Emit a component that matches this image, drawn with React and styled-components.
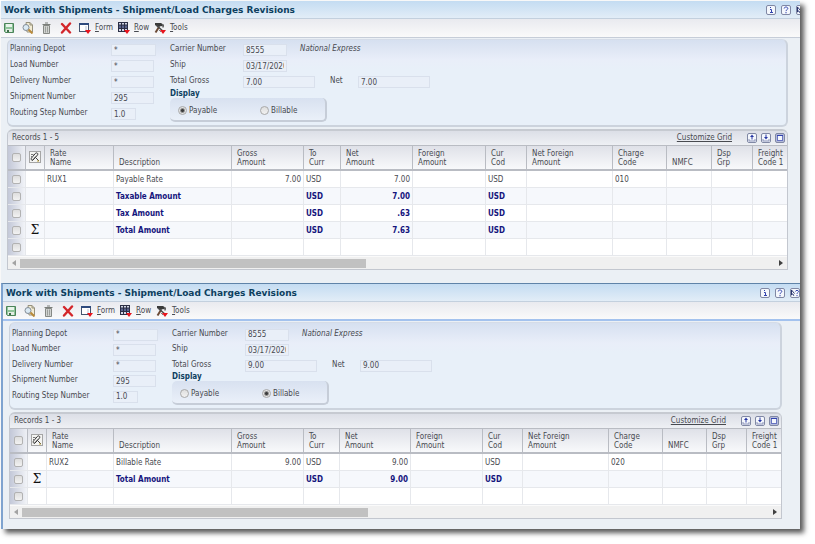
import React, { useState } from 'react';
import styled, { createGlobalStyle } from 'styled-components';

const GlobalStyle = createGlobalStyle`
  * {
    box-sizing: border-box;
  }
  body {
    margin: 0;
    background: white;
    font-family: "DejaVu Sans Condensed", "Open Sans", sans-serif;
    font-size: 8px;
    line-height: 10px;
    color: #484a50;
  }
  button, input {
    font: inherit;
    color: inherit;
    margin: 0;
    padding: 0;
  }
`;

const Shell = styled.main`
  margin: 1px 15px 15px 1px;
  background: #ebf0f5;
  box-shadow: 4px 4px 5px rgba(0, 0, 0, 0.65);
`;

const Clip = styled.div`
  overflow: hidden;
`;

const Window = styled.section`
  ${(props) => (props.$framed ? `
    border-top: 1px solid #5f83a8;
    border-left: 2px solid #7fa3cf;
    padding-bottom: 10px;
  ` : `
    margin-right: -6px;
    padding-bottom: 13px;
  `)}
`;

const TitleBar = styled.header`
  display: flex;
  align-items: center;
  justify-content: space-between;
  height: 18px;
  padding: 0 0 0 3px;
  border-bottom: 1px solid #c3d0de;
  background: linear-gradient(#c4dcf2, #e2edf7);
`;

const Title = styled.h1`
  margin: 0;
  font-family: "DejaVu Sans", "Open Sans", sans-serif;
  font-size: 9px;
  line-height: 12px;
  font-weight: 700;
  color: #0d3f60;
`;

const IconRow = styled.div`
  display: flex;
  align-items: center;
  gap: ${(props) => props.$gap || 4}px;
`;

const IconButton = styled.button`
  display: flex;
  border: 0;
  background: none;
  cursor: pointer;
`;

const Toolbar = styled.nav`
  display: flex;
  align-items: center;
  gap: 7px;
  height: 19px;
  padding: 0 2px;
  background: linear-gradient(#e9eaef, #fafafa);
  border-bottom: ${(props) => (props.$framed ? '2px solid #a3c2ee' : '1px solid #c6cdd8')};
`;

const MenuButton = styled(IconButton)`
  align-items: center;
  gap: 4px;
`;

const Panel = styled.form`
  display: flex;
  height: 88px;
  margin: 1px 18px 0 6px;
  padding: ${(props) => (props.$compact ? '4px' : '2px')} 0 0 2px;
  border: 1px solid #ccd3dd;
  border-width: 1px 2px 2px 1px;
  border-top-color: #d5dce8;
  border-radius: 6px;
  background: linear-gradient(#d6e0f0, #e9eef9 20px, #e8f0f9 30px);
`;

const FieldColumn = styled.div`
  display: grid;
  align-content: start;
  grid-auto-rows: ${(props) => (props.$compact ? '15px 16px' : '16px')};
  width: ${(props) => (props.$width ? `${props.$width}px` : 'auto')};
`;

const FieldRow = styled.div`
  display: flex;
  align-items: center;
`;

const Label = styled.label`
  width: ${(props) => props.$width}px;
  padding-bottom: 2px;
  white-space: nowrap;
`;

const Field = styled.input`
  width: ${(props) => props.$width}px;
  height: 12px;
  padding: 0 2px;
  border: 1px solid #d9e0ec;
  background: #e9eff8;
  outline: none;
`;

const Carrier = styled.em`
  margin-left: 13px;
  padding-bottom: 2px;
`;

const NetLabel = styled(Label)`
  margin-left: 15px;
`;

const Display = styled.fieldset`
  grid-row: span 2;
  min-width: 0;
  width: 157px;
  margin: 0;
  padding: 0;
  border: 0;
`;

const Legend = styled.legend`
  padding: 0;
  line-height: 8px;
  font-weight: 700;
  color: #0d3f60;
`;

const RadioBox = styled.div`
  display: flex;
  align-items: center;
  height: 24px;
  padding: 3px 0 0 8px;
  border: solid #c6cdd8;
  border-width: 0 2px 2px 0;
  border-radius: 5px;
  background: linear-gradient(#d8e1f0, #eaf0f9);
`;

const RadioLabel = styled.label`
  display: flex;
  flex: none;
  align-items: center;
  gap: 2px;
  &:first-child {
    width: 82px;
  }
`;

const Radio = styled.input`
  appearance: none;
  width: 9px;
  height: 9px;
  border: 1px solid #a9a9a9;
  border-radius: 50%;
  background: linear-gradient(#dcdcdc, #f4f4f4) border-box;
  &:checked {
    background: radial-gradient(circle, #3c3c3c 1px, #e6e6e6 3px) border-box;
  }
`;

const GridBox = styled.div`
  margin: 2px 18px 0 6px;
  border: 1px solid #c3c7cf;
  border-top: 2px solid #c6cad1;
  border-radius: 6px 6px 0 0;
  overflow: hidden;
`;

const GridBar = styled.div`
  display: flex;
  align-items: center;
  height: 14px;
  padding: 0 2px 0 4px;
  background: linear-gradient(#dcdfe7, #eef0f4);
`;

const GridLink = styled.a`
  margin-left: auto;
  margin-right: 15px;
  color: #484a50;
  text-decoration: underline;
`;

const Table = styled.table`
  width: 100%;
  table-layout: fixed;
  border-collapse: separate;
  border-spacing: 0;
  background: white;
`;

const Th = styled.th`
  height: 26px;
  padding: 0 0 2px 5px;
  border: solid #b9bcc3;
  border-width: 1px 1px 2px 0;
  background: linear-gradient(#dfe1e8, #f8f9fb);
  line-height: 9px;
  font-weight: 400;
  text-align: left;
  vertical-align: bottom;
  white-space: pre;
  &:last-child {
    border-right: 0;
  }
`;

const SelectTh = styled(Th)`
  padding: 0;
  text-align: center;
  vertical-align: middle;
  ${(props) => (props.$shaded ? 'background: linear-gradient(90deg, #c3c8d8, #eef0f5);' : '')}
`;

const Tr = styled.tr`
  background: ${(props) => (props.$odd ? '#f6f8fc' : 'white')};
  font-weight: ${(props) => (props.$total ? 700 : 400)};
  color: ${(props) => (props.$total ? '#14147c' : 'inherit')};
`;

const Td = styled.td`
  height: 17px;
  padding: 1px 2px 0;
  border: solid #e6e8ec;
  border-width: 0 1px 1px 0;
  text-align: ${(props) => (props.$right ? 'right' : 'left')};
  white-space: nowrap;
  &:last-child {
    border-right: 0;
  }
`;

const SelectTd = styled(Td)`
  padding: 0;
  background: linear-gradient(90deg, #c3c8d8, #f2f4f8);
  text-align: center;
`;

const SigmaTd = styled(Td)`
  padding: 0;
  font-family: "DejaVu Serif", serif;
  font-size: 12px;
  line-height: 12px;
  font-weight: 400;
  color: #101010;
  text-align: center;
`;

const Check = styled.input`
  appearance: none;
  display: block;
  width: 9px;
  height: 9px;
  margin: 0 auto;
  border: 1px solid #b2b2b2;
  border-radius: 2px;
  background: linear-gradient(#dedede, #f2f2f2);
`;

const ScrollBar = styled.div`
  display: flex;
  align-items: center;
  height: 13px;
  border-top: 1px solid #fafafa;
  background: #f0f0f0;
`;

const ScrollTrack = styled.div`
  flex: 1;
`;

const ScrollThumb = styled.div`
  width: 346px;
  height: 9px;
  background: #c1c1c1;
`;

const ScrollButton = styled(IconButton)`
  width: 12px;
  justify-content: center;
`;

const SaveIcon = () => (
  <svg width="12" height="12" viewBox="0 0 12 12">
    <path d="M1.500 1.500h9v9h-8l-1-1z" fill="#8fc49a" stroke="#4c8459" />
    <rect x="3" y="2" width="6" height="3" fill="#e8f4ea" />
    <rect x="3" y="7" width="6" height="3" fill="#e4ece4" />
    <rect x="4" y="8" width="2" height="2" fill="#3f6f49" />
  </svg>
);

const FindIcon = () => (
  <svg width="12" height="12" viewBox="0 0 12 12">
    <path d="M4 0.500h4l2.500 2.500v7H5z" fill="#f3ecd4" stroke="#96917c" />
    <path d="M8 0.500v2.500h2.500" fill="none" stroke="#96917c" />
    <circle cx="4" cy="5.500" r="3" fill="#dbeaf4" stroke="#848d97" />
    <path d="M6.500 7.500l4 4" stroke="#b98a3a" strokeWidth="2" />
  </svg>
);

const TrashIcon = () => (
  <svg width="12" height="12" viewBox="0 0 12 12">
    <path d="M2.500 3.500v8h6v-8z" fill="#d2d4d1" stroke="#858884" />
    <path d="M1.500 2.500h8M4 1h3" stroke="#7b7e7a" />
    <path d="M4.500 4.500v6M6.500 4.500v6" stroke="#9c9f9b" />
  </svg>
);

const DeleteIcon = () => (
  <svg width="12" height="12" viewBox="0 0 12 12">
    <path d="M2 2l8 8.500M10 1.500L2 10.500" stroke="#d3262a" strokeWidth="2.400" strokeLinecap="round" />
  </svg>
);

const FormIcon = () => (
  <svg width="12" height="12" viewBox="0 0 12 12">
    <rect x="0.500" y="1.500" width="9" height="8" fill="#fff" stroke="#44546e" />
    <rect x="0" y="1" width="10" height="2" fill="#2e4a7d" />
    <path d="M7 4v5" stroke="#b8c3d6" />
    <path d="M6 8h6l-3 4z" fill="#e8141c" />
  </svg>
);

const RowIcon = () => (
  <svg width="12" height="12" viewBox="0 0 12 12">
    <rect x="0.500" y="0.500" width="9" height="9" fill="#d3d7e6" stroke="#2b2f45" />
    <rect x="1" y="3" width="8" height="3" fill="#5a648e" />
    <path d="M3.500 1v9M6.500 1v9M0 3h10M0 6.500h10" stroke="#2b2f45" />
    <path d="M6 8h6l-3 4z" fill="#e8141c" />
  </svg>
);

const ToolsIcon = () => (
  <svg width="12" height="12" viewBox="0 0 12 12">
    <path d="M1 1h6l3 2v2L7 4 5 5 1 3z" fill="#3a3a3a" />
    <path d="M5 5l-3.500 5.500" stroke="#6b4a35" strokeWidth="2" />
    <path d="M2 3l8 7" stroke="#4a4a4a" strokeWidth="1.500" />
    <path d="M9 2v4M5 8l2 2" stroke="#808080" />
    <path d="M6 8h6l-3 4z" fill="#e8141c" />
  </svg>
);

const BoxIcon = ({ children, fill = '#f4f7fc' }) => (
  <svg width="10" height="10" viewBox="0 0 10 10">
    <rect x="0.500" y="0.500" width="9" height="9" rx="1.500" fill={fill} stroke="#8088a4" />
    {children}
  </svg>
);

const InfoIcon = () => (
  <BoxIcon>
    <path d="M4 4.500h1.500v3.500M4 7.500h3M4.500 2v1" fill="none" stroke="#3243ae" />
  </BoxIcon>
);

const HelpIcon = () => (
  <BoxIcon>
    <path d="M3.200 3.500c0-2 3.600-2 3.600 0 0 1.200-1.800 1.200-1.800 2.600M5 7v1.300" fill="none" stroke="#3243ae" />
  </BoxIcon>
);

const ItemHelpIcon = () => (
  <BoxIcon>
    <path d="M1.500 2v5l1.300-1.200 1 2M1.500 2l3 3.500" fill="none" stroke="#29356f" />
    <path d="M5.500 3.500c0-1.500 3-1.500 3 0 0 1-1.500 1-1.500 2.300M7 7v1.200" fill="none" stroke="#3243ae" />
  </BoxIcon>
);

const ExportIcon = () => (
  <BoxIcon>
    <path d="M2 6v2h6V6" fill="none" stroke="#8a92b8" />
    <path d="M5 6.500V3" stroke="#2636a4" />
    <path d="M3 4l2-2.500L7 4z" fill="#2636a4" />
  </BoxIcon>
);

const ImportIcon = () => (
  <BoxIcon>
    <path d="M2 6v2h6V6" fill="none" stroke="#8a92b8" />
    <path d="M5 1.500V5" stroke="#2636a4" />
    <path d="M3 4h4L5 6.500z" fill="#2636a4" />
  </BoxIcon>
);

const MaximizeIcon = () => (
  <BoxIcon fill="#b4bbda">
    <rect x="2.500" y="2.500" width="5" height="5" fill="#f4f7fc" stroke="#6874c2" />
    <path d="M2 2.500h6" stroke="#3243ae" />
  </BoxIcon>
);

const AttachIcon = () => (
  <svg width="12" height="12" viewBox="0 0 12 12">
    <rect x="0.500" y="0.500" width="11" height="11" fill="#f4f4f2" stroke="#a5a5a5" />
    <path d="M3.500 9.500l5-5.500c1.200-1.500-1-3-2.200-1.500L2.500 7C1.500 8.500 3 10 4.200 8.700L7 5.500" fill="none" stroke="#333" />
    <path d="M2 3.500h2.500M2 5.500h2" stroke="#777" />
    <path d="M7 7l3 3" stroke="#444" />
    <path d="M8 10h2" stroke="#c0a33c" />
  </svg>
);

const Arrow = ({ d, fill }) => (
  <svg width="4" height="6" viewBox="0 0 4 6">
    <path d={d} fill={fill} />
  </svg>
);

const headings = [
  'Rate\nName', 'Description', 'Gross\nAmount', 'To\nCurr', 'Net\nAmount', 'Foreign\nAmount',
  'Cur\nCod', 'Net Foreign\nAmount', 'Charge\nCode', 'NMFC', 'Dsp\nGrp', 'Freight\nCode 1',
];

// columns 2 and 4 hold amounts
const rightAligned = [2, 4];

const payable = {
  id: 'payable',
  records: 'Records 1 - 5',
  total: '7.00',
  mode: 'Payable',
  columns: [18, 19, 69, 118, 72, 37, 72, 73, 41, 86, 54, 45, 41],
  rows: [
    { cells: ['RUX1', 'Payable Rate', '7.00', 'USD', '7.00', '', 'USD', '', '010'] },
    { total: true, cells: ['', 'Taxable Amount', '', 'USD', '7.00', '', 'USD'] },
    { total: true, cells: ['', 'Tax Amount', '', 'USD', '.63', '', 'USD'] },
    { total: true, sigma: true, cells: ['', 'Total Amount', '', 'USD', '7.63', '', 'USD'] },
    { cells: [] },
  ],
};

const billable = {
  id: 'billable',
  framed: true,
  records: 'Records 1 - 3',
  total: '9.00',
  mode: 'Billable',
  columns: [18, 19, 67, 118, 72, 36, 71, 72, 40, 86, 54, 44, 40],
  rows: [
    { cells: ['RUX2', 'Billable Rate', '9.00', 'USD', '9.00', '', 'USD', '', '020'] },
    { total: true, sigma: true, cells: ['', 'Total Amount', '', 'USD', '9.00', '', 'USD'] },
    { cells: [] },
  ],
};

const Header = ({ framed }) => (
  <>
    <TitleBar>
      <Title>Work with Shipments - Shipment/Load Charges Revisions</Title>
      <IconRow $gap={5}>
        <IconButton type="button" aria-label="About"><InfoIcon /></IconButton>
        <IconButton type="button" aria-label="Help"><HelpIcon /></IconButton>
        <IconButton type="button" aria-label="Item help"><ItemHelpIcon /></IconButton>
      </IconRow>
    </TitleBar>
    <Toolbar $framed={framed}>
      <IconButton type="button" aria-label="Save"><SaveIcon /></IconButton>
      <IconButton type="button" aria-label="Find"><FindIcon /></IconButton>
      <IconButton type="button" aria-label="Delete"><TrashIcon /></IconButton>
      <IconButton type="button" aria-label="Close"><DeleteIcon /></IconButton>
      <IconRow $gap={5}>
        <MenuButton type="button"><FormIcon /><span><u>F</u>orm</span></MenuButton>
        <MenuButton type="button"><RowIcon /><span><u>R</u>ow</span></MenuButton>
        <MenuButton type="button"><ToolsIcon /><span><u>T</u>ools</span></MenuButton>
      </IconRow>
    </Toolbar>
  </>
);

const LeftField = ({ id, label, value, width = 43 }) => (
  <FieldRow>
    <Label htmlFor={id} $width={101}>{label}</Label>
    <Field id={id} $width={width} defaultValue={value} readOnly />
  </FieldRow>
);

const Details = ({ data }) => {
  const [mode, setMode] = useState(data.mode);
  const { id, total, framed } = data;

  return (
    <Panel $compact={framed}>
      <FieldColumn $width={160} $compact={framed}>
        <LeftField id={`${id}-depot`} label="Planning Depot" value="*" width={45} />
        <LeftField id={`${id}-load`} label="Load Number" value="*" />
        <LeftField id={`${id}-delivery`} label="Delivery Number" value="*" />
        <LeftField id={`${id}-shipment`} label="Shipment Number" value="295" />
        <LeftField id={`${id}-step`} label="Routing Step Number" value="1.0" width={25} />
      </FieldColumn>
      <FieldColumn $compact={framed}>
        <FieldRow>
          <Label htmlFor={`${id}-carrier`} $width={73}>Carrier Number</Label>
          <Field id={`${id}-carrier`} $width={44} defaultValue="8555" readOnly />
          <Carrier>National Express</Carrier>
        </FieldRow>
        <FieldRow>
          <Label htmlFor={`${id}-ship`} $width={73}>Ship</Label>
          <Field id={`${id}-ship`} $width={44} defaultValue="03/17/2020" readOnly />
        </FieldRow>
        <FieldRow>
          <Label htmlFor={`${id}-gross`} $width={73}>Total Gross</Label>
          <Field id={`${id}-gross`} $width={72} defaultValue={total} readOnly />
          <NetLabel htmlFor={`${id}-net`} $width={28}>Net</NetLabel>
          <Field id={`${id}-net`} $width={72} defaultValue={total} readOnly />
        </FieldRow>
        <Display>
          <Legend>Display</Legend>
          <RadioBox>
            {['Payable', 'Billable'].map((name) => (
              <RadioLabel key={name}>
                <Radio
                  type="radio"
                  name={`${id}-display`}
                  checked={mode === name}
                  onChange={() => setMode(name)}
                />
                {name}
              </RadioLabel>
            ))}
          </RadioBox>
        </Display>
      </FieldColumn>
    </Panel>
  );
};

const ChargesGrid = ({ data }) => (
  <GridBox>
    <GridBar>
      <span>{data.records}</span>
      <GridLink href="#customize">Customize Grid</GridLink>
      <IconRow>
        <IconButton type="button" aria-label="Export"><ExportIcon /></IconButton>
        <IconButton type="button" aria-label="Import"><ImportIcon /></IconButton>
        <IconButton type="button" aria-label="Maximize"><MaximizeIcon /></IconButton>
      </IconRow>
    </GridBar>
    <Table>
      <colgroup>
        {data.columns.map((width, i) => <col key={i} width={width} />)}
        <col />
      </colgroup>
      <thead>
        <tr>
          <SelectTh $shaded><Check type="checkbox" aria-label="Select all" /></SelectTh>
          <SelectTh><AttachIcon /></SelectTh>
          {headings.map((heading) => <Th key={heading}>{heading}</Th>)}
        </tr>
      </thead>
      <tbody>
        {data.rows.map((row, i) => (
          <Tr key={i} $odd={i % 2 === 1} $total={row.total}>
            <SelectTd><Check type="checkbox" aria-label={`Select row ${i + 1}`} /></SelectTd>
            <SigmaTd>{row.sigma ? 'Σ' : ''}</SigmaTd>
            {headings.map((heading, col) => (
              <Td key={heading} $right={rightAligned.includes(col)}>{row.cells[col]}</Td>
            ))}
          </Tr>
        ))}
      </tbody>
    </Table>
    <ScrollBar>
      <ScrollButton type="button" aria-label="Scroll left">
        <Arrow d="M4 0v6L0 3z" fill="#a3a3a3" />
      </ScrollButton>
      <ScrollTrack><ScrollThumb /></ScrollTrack>
      <ScrollButton type="button" aria-label="Scroll right">
        <Arrow d="M0 0v6l4-3z" fill="#404040" />
      </ScrollButton>
    </ScrollBar>
  </GridBox>
);

const ChargesWindow = ({ data }) => (
  <Window $framed={data.framed}>
    <Header framed={data.framed} />
    <Details data={data} />
    <ChargesGrid data={data} />
  </Window>
);

const App = () => (
  <>
    <GlobalStyle />
    <Shell>
      <Clip>
        <ChargesWindow data={payable} />
        <ChargesWindow data={billable} />
      </Clip>
    </Shell>
  </>
);

export default App;
